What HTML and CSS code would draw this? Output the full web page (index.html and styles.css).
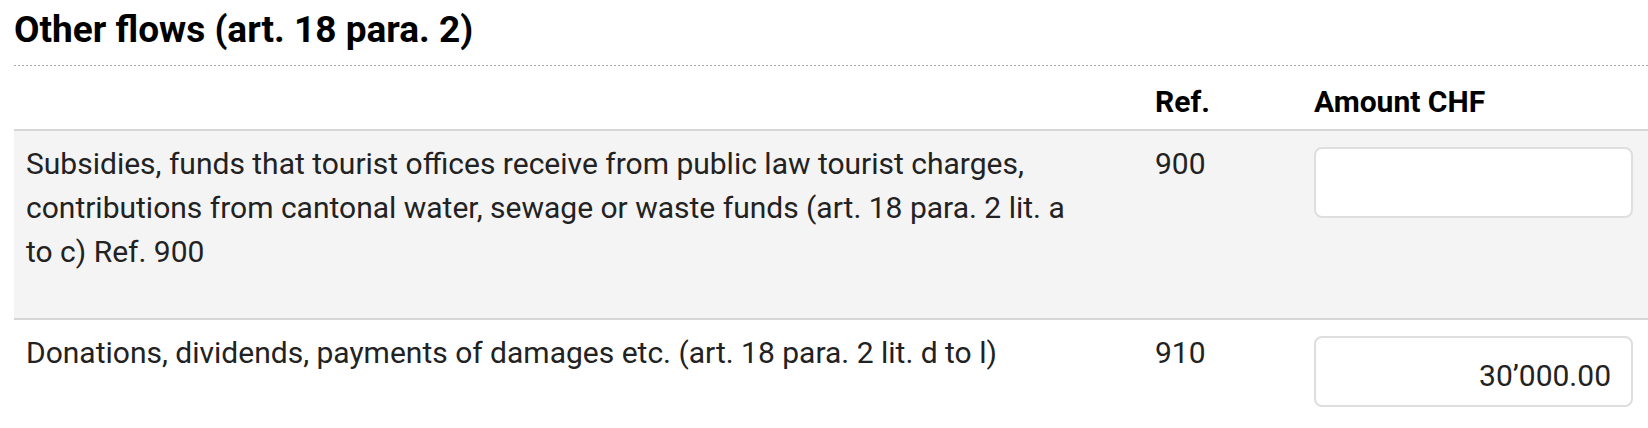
FILE: index.html
```html
<!DOCTYPE html>
<html lang="en">
<head>
<meta charset="utf-8">
<title>Other flows</title>
<link rel="stylesheet" href="styles.css">
</head>
<body>
<section class="page">
  <h2 class="title">Other flows (art. 18 para. 2)</h2>
  <div class="table">
    <div class="row head">
      <div class="cell desc"></div>
      <div class="cell ref">Ref.</div>
      <div class="cell amount">Amount CHF</div>
    </div>
    <div class="row shaded">
      <div class="cell desc"><p class="text">Subsidies, funds that tourist offices receive from public law tourist charges, contributions from cantonal water, sewage or waste funds (art. 18 para. 2 lit. a to c) Ref. 900</p></div>
      <div class="cell ref">900</div>
      <div class="cell amount"><input class="field" type="text" value=""></div>
    </div>
    <div class="row">
      <div class="cell desc"><p class="text">Donations, dividends, payments of damages etc. (art. 18 para. 2 lit. d to l)</p></div>
      <div class="cell ref">910</div>
      <div class="cell amount"><input class="field" type="text" value="30’000.00"></div>
    </div>
  </div>
</section>
</body>
</html>
```
FILE: styles.css
```css
html, body {
  margin: 0;
  padding: 0;
  background: #ffffff;
}

body {
  font-family: Roboto, "Liberation Sans", sans-serif;
  color: #222222;
  width: 1648px;
  overflow: hidden;
}

.page {
  padding-left: 14px;
}

.title {
  margin: 0;
  padding: 8px 0 15px 0;
  font-size: 37px;
  line-height: 43px;
  font-weight: 700;
  color: #000000;
  background-image: linear-gradient(to right, #a8a8a8 50%, transparent 50%);
  background-size: 4px 1px;
  background-repeat: repeat-x;
  background-position: left bottom;
}

.row {
  display: grid;
  grid-template-columns: 1129px 159px 1fr;
  border-bottom: 2px solid #d6d6d6;
}

.row:last-child {
  border-bottom: none;
}

.row.shaded {
  background: #f4f4f4;
}

.cell {
  font-size: 30px;
  line-height: 44px;
  padding: 11px 12px 44px 12px;
}

.head .cell {
  padding: 14px 12px 5px 12px;
  font-weight: 700;
  color: #000000;
}

.desc {
  padding-right: 60px;
}

.text {
  margin: 0;
}

.amount {
  padding: 16px 15px 0 12px;
}

.head .amount {
  padding: 14px 15px 5px 12px;
}

.field {
  display: block;
  box-sizing: border-box;
  width: 100%;
  height: 71px;
  margin: 0;
  padding: 9px 20px 1px 20px;
  border: 2px solid #dedede;
  border-radius: 8px;
  background: #ffffff;
  font-family: Roboto, "Liberation Sans", sans-serif;
  font-size: 30px;
  color: #222222;
  text-align: right;
  outline: none;
}
```
